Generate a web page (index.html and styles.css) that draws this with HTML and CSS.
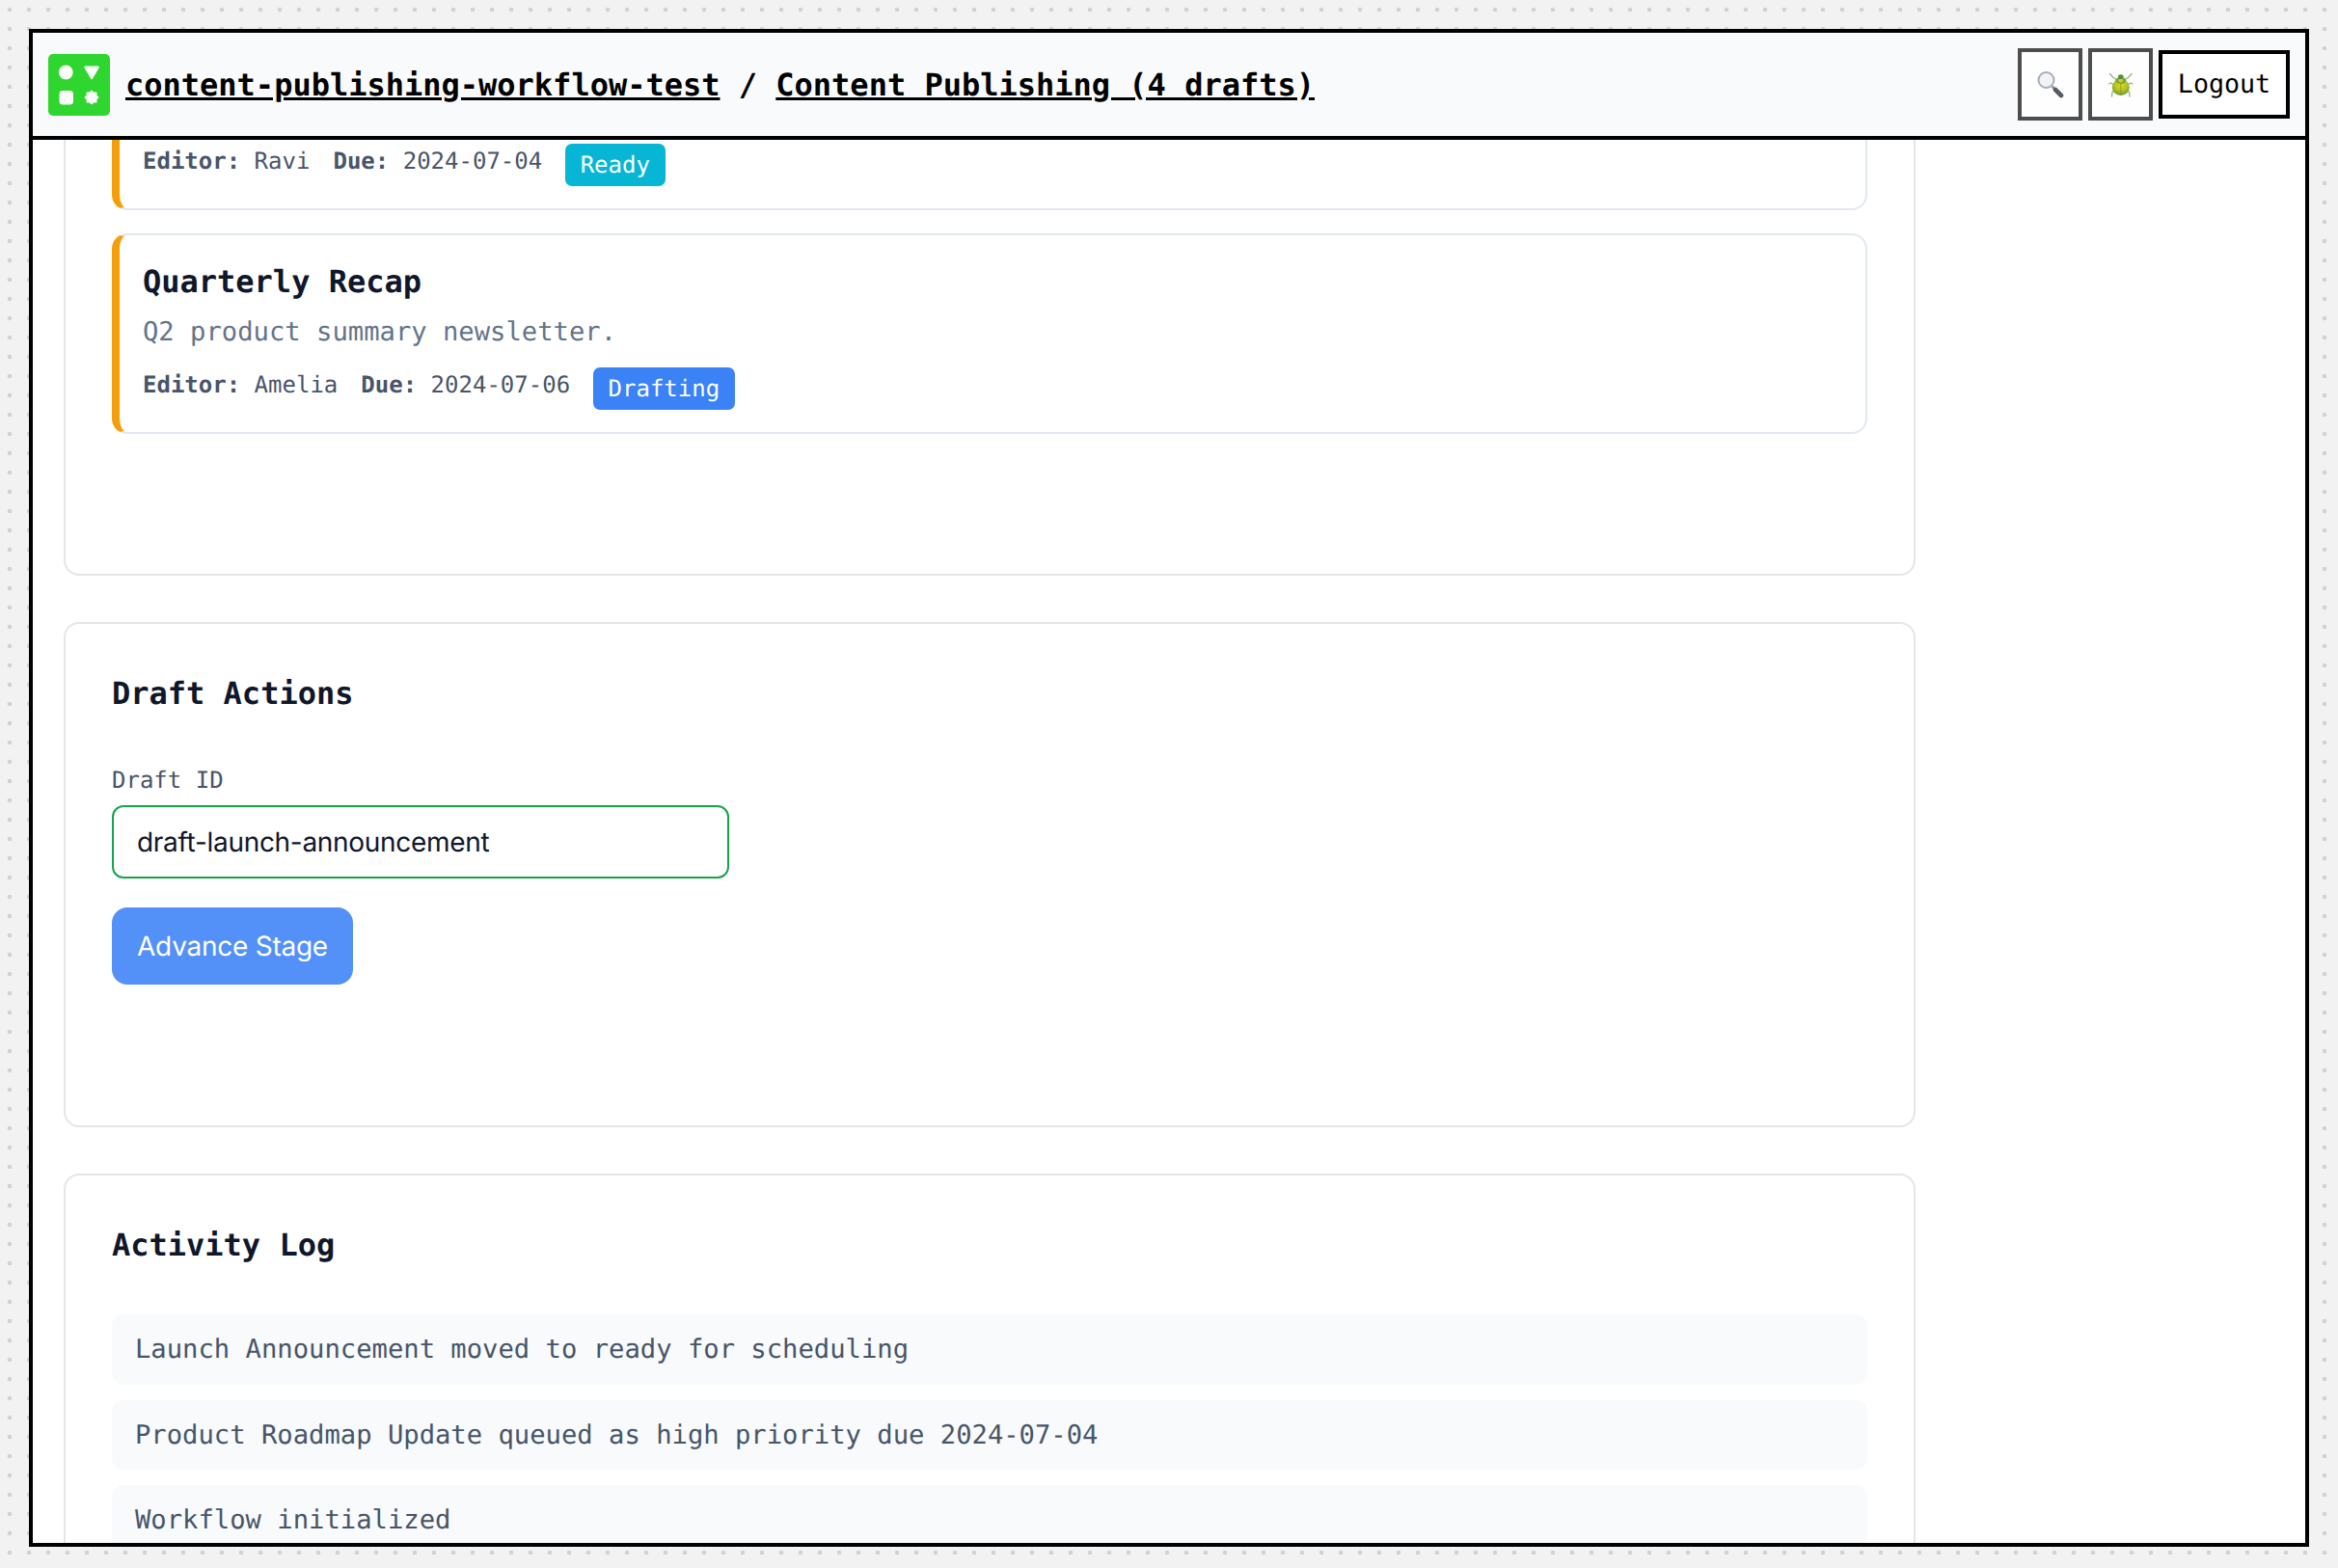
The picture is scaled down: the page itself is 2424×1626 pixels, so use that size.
FILE: index.html
```html
<!DOCTYPE html>
<html lang="en">
<head>
    <meta charset="UTF-8">
    <meta name="viewport" content="width=device-width, initial-scale=1.0">
    <title>Content Publishing</title>
    <link rel="stylesheet" href="styles.css">
</head>
<body>
    <div class="frame">
        <header class="topbar">
            <svg class="logo" viewBox="0 0 64 64" aria-hidden="true">
                <rect width="64" height="64" rx="5" fill="#2fd62f"/>
                <circle cx="18.3" cy="19" r="7.4" fill="#fbfefb"/>
                <path d="M38.5 12.5h13.2a1.2 1.2 0 0 1 1 1.8l-6.6 11.2a1.2 1.2 0 0 1-2 0l-6.6-11.2a1.2 1.2 0 0 1 1-1.8z" fill="#fbfefb"/>
                <rect x="11.5" y="38" width="14.5" height="14.5" rx="3.5" fill="#fbfefb"/>
                <polygon points="45,37.4 47.3,39.6 50.4,39.6 50.5,42.7 52.6,45 50.5,47.3 50.4,50.4 47.3,50.5 45,52.6 42.7,50.5 39.6,50.4 39.6,47.3 37.4,45 39.6,42.7 39.6,39.6 42.7,39.6" fill="#fbfefb"/>
            </svg>
            <h1 class="crumbs"><a href="#">content-publishing-workflow-test</a> / <a href="#">Content Publishing (4 drafts)</a></h1>
            <div class="topbar-actions">
                <button class="icon-btn" aria-label="Search">
                    <svg width="28" height="28" viewBox="0 0 28 28" aria-hidden="true">
                        <path d="M15.5 15.5l3 3" stroke="#8d929b" stroke-width="2.5"/>
                        <path d="M19 19l6 6" stroke="#565b63" stroke-width="4.6" stroke-linecap="round"/>
                        <circle cx="9.5" cy="9" r="8" fill="#f2f3f5" stroke="#a6adba" stroke-width="2"/>
                    </svg>
                </button>
                <button class="icon-btn" aria-label="Debug">
                    <svg width="28" height="28" viewBox="0 0 28 28" aria-hidden="true">
                        <defs>
                            <radialGradient id="shell" cx="50%" cy="35%" r="65%">
                                <stop offset="0" stop-color="#e6d81e"/>
                                <stop offset="0.55" stop-color="#b3c224"/>
                                <stop offset="1" stop-color="#5f9e35"/>
                            </radialGradient>
                        </defs>
                        <g fill="none" stroke="#8fb86e" stroke-width="1.3" stroke-linecap="round">
                            <path d="M9.5 8.5L6 6.5 2.5 2.5"/>
                            <path d="M18 8.5l3.5-2 3.5-4"/>
                            <path d="M6 13.5L3.5 12 1.5 13"/>
                            <path d="M21.500 13.500L24 12l2 1"/>
                            <path d="M7 20l-2 1.500-.5 4.500"/>
                            <path d="M20.500 20l2 1.500.5 4.500"/>
                        </g>
                        <ellipse cx="13.8" cy="16.5" rx="9" ry="8.5" fill="url(#shell)"/>
                        <path d="M13.8 11v14" stroke="#86922a" stroke-width="0.8"/>
                        <ellipse cx="13.8" cy="9.5" rx="5.5" ry="3.5" fill="#6da63a"/>
                        <ellipse cx="13.8" cy="9.5" rx="2.5" ry="2" fill="#d9c62a"/>
                        <ellipse cx="13.8" cy="5.5" rx="2.8" ry="2.3" fill="#4f8f3c"/>
                    </svg>
                </button>
                <button class="logout-btn">Logout</button>
            </div>
        </header>

        <main class="main">
            <div class="main-scrolled">
                <section class="panel panel-drafts">
                    <article class="draft draft-cut">
                        <p class="draft-meta"><b>Editor:</b> Ravi <b class="due">Due:</b> 2024-07-04 <span class="badge badge-ready">Ready</span></p>
                    </article>
                    <article class="draft">
                        <h3 class="draft-title">Quarterly Recap</h3>
                        <p class="draft-desc">Q2 product summary newsletter.</p>
                        <p class="draft-meta"><b>Editor:</b> Amelia <b class="due">Due:</b> 2024-07-06 <span class="badge badge-drafting">Drafting</span></p>
                    </article>
                </section>

                <section class="panel">
                    <h2 class="panel-title">Draft Actions</h2>
                    <label class="field-label" for="draft-id">Draft ID</label>
                    <input class="field-input" id="draft-id" type="text" value="draft-launch-announcement">
                    <button class="primary-btn">Advance Stage</button>
                </section>

                <section class="panel">
                    <h2 class="panel-title">Activity Log</h2>
                    <ul class="log">
                        <li>Launch Announcement moved to ready for scheduling</li>
                        <li>Product Roadmap Update queued as high priority due 2024-07-04</li>
                        <li>Workflow initialized</li>
                    </ul>
                </section>
            </div>
        </main>
    </div>
</body>
</html>
```

FILE: styles.css
```css
* {
    box-sizing: border-box;
    text-rendering: geometricPrecision;
}
html, body {
    height: 100%;
}
body {
    margin: 0;
    padding: 30px 30px 22px;
    overflow: hidden;
    background-color: #f2f2f2;
    background-image: radial-gradient(circle at 10px 10px, #d2d2d2 2px, transparent 2.6px);
    background-size: 20px 20px;
    font-family: "DejaVu Sans Mono", monospace;
}
.frame {
    display: flex;
    flex-direction: column;
    height: 100%;
    border: 4px solid #000;
    background-color: #fff;
}

/* top bar */
.topbar {
    display: flex;
    align-items: center;
    flex: none;
    height: 111px;
    padding: 0 16px;
    background-color: #f9fafc;
    border-bottom: 4px solid #000;
}
.logo {
    flex: none;
    width: 64px;
    height: 64px;
    margin-right: 16px;
}
.crumbs {
    margin: 0;
    font-size: 32px;
    font-weight: 700;
    color: #000;
    white-space: pre;
}
.crumbs a {
    color: #000;
    text-decoration: underline;
}
.topbar-actions {
    display: flex;
    align-items: center;
    gap: 6px;
    margin-left: auto;
}
.icon-btn {
    display: flex;
    align-items: center;
    justify-content: center;
    width: 67px;
    height: 75px;
    padding: 0;
    border: 4px solid #4d4d4d;
    background-color: #fefefe;
}
.logout-btn {
    width: 136px;
    height: 71px;
    padding: 0;
    border: 4px solid #000;
    background-color: #fff;
    color: #000;
    font-family: "DejaVu Sans Mono", monospace;
    font-size: 26.67px;
}

/* scrolled page content */
.main {
    flex: 1;
    min-height: 0;
    overflow: hidden;
}
.main-scrolled {
    display: flex;
    flex-direction: column;
    gap: 48px;
    width: 1920px;
    margin: -185px 0 0 32px;
}
.panel {
    padding: 48px 48px 146px;
    border: 2px solid #e5e5e5;
    border-radius: 16px;
    background-color: #fff;
}
.panel-drafts {
    padding-bottom: 145px;
}
.panel-title {
    margin: 0 0 48px;
    font-size: 32px;
    font-weight: 700;
    line-height: 48px;
    color: #0f172a;
}

/* draft cards */
.draft {
    height: 208px;
    margin-bottom: 24px;
    padding: 29px 24px 0;
    border: 2px solid #e2e8f0;
    border-left: 8px solid #f59e0b;
    border-radius: 16px;
}
.draft:last-child {
    margin-bottom: 0;
}
.draft-cut {
    padding-top: 133px;
}
.draft-title {
    margin: 0;
    font-size: 32px;
    font-weight: 700;
    line-height: 38px;
    color: #0f172a;
}
.draft-desc {
    margin: 18px 0 0;
    font-size: 27.2px;
    line-height: 32px;
    color: #64748b;
}
.draft-meta {
    margin: 16px 0 0;
    font-size: 24px;
    line-height: 44px;
    color: #475569;
    white-space: pre-wrap;
}
.draft-cut .draft-meta {
    margin-top: 0;
}
.due {
    margin-left: 9.6px;
}
.badge {
    display: inline-block;
    margin-left: 9px;
    height: 44px;
    padding: 0 16px;
    border-radius: 7px;
    color: #fff;
    line-height: 44px;
    vertical-align: -4px;
}
.badge-ready {
    background-color: #06b6d4;
}
.badge-drafting {
    background-color: #3b82f6;
}

/* form */
.field-label {
    display: block;
    margin-bottom: 8px;
    font-size: 24px;
    line-height: 36px;
    color: #475569;
}
.field-input {
    display: block;
    width: 640px;
    height: 76px;
    padding: 0 24px;
    border: 2px solid #16a34a;
    border-radius: 12px;
    outline: none;
    background-color: #fff;
    color: #0f172a;
    font-family: Inter, sans-serif;
    font-size: 28px;
    letter-spacing: -0.3px;
}
.primary-btn {
    display: block;
    width: 250px;
    height: 80px;
    margin-top: 30px;
    padding: 0;
    border: none;
    border-radius: 16px;
    background-color: #5390f8;
    color: #fff;
    font-family: Inter, sans-serif;
    font-size: 28px;
    letter-spacing: -0.25px;
}

/* activity log */
.log {
    display: flex;
    flex-direction: column;
    gap: 16px;
    margin: 0;
    padding: 0;
    list-style: none;
}
.log li {
    height: 72.5px;
    padding: 0 24px;
    border-radius: 12px;
    background-color: #f8fafc;
    color: #475569;
    font-size: 27.2px;
    line-height: 74px;
}
```
